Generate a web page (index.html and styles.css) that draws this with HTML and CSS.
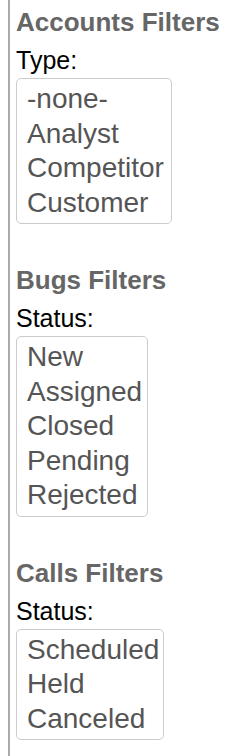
FILE: index.html
```html
<!DOCTYPE html>
<html lang="en">

<head>
    <meta charset="UTF-8">
    <title>Filters</title>
    <link rel="stylesheet" href="styles.css">
</head>

<body>
    <div class="sidebar">
        <div class="filter-group">
            <h3 class="filter-title">Accounts Filters</h3>
            <label class="filter-label" for="account-type">Type:</label>
            <select class="filter-list accounts-list" id="account-type" multiple size="4">
                <option>-none-</option>
                <option>Analyst</option>
                <option>Competitor</option>
                <option>Customer</option>
            </select>
        </div>

        <div class="filter-group">
            <h3 class="filter-title">Bugs Filters</h3>
            <label class="filter-label" for="bug-status">Status:</label>
            <select class="filter-list bugs-list" id="bug-status" multiple size="5">
                <option>New</option>
                <option>Assigned</option>
                <option>Closed</option>
                <option>Pending</option>
                <option>Rejected</option>
            </select>
        </div>

        <div class="filter-group">
            <h3 class="filter-title">Calls Filters</h3>
            <label class="filter-label" for="call-status">Status:</label>
            <select class="filter-list calls-list" id="call-status" multiple size="3">
                <option>Scheduled</option>
                <option>Held</option>
                <option>Canceled</option>
            </select>
        </div>
    </div>
</body>

</html>
```

FILE: styles.css
```css
*{
    box-sizing: border-box;
}

body{
    margin: 0;
    font-family: "Liberation Sans", Arial, sans-serif;
}

.sidebar{
    margin-left: 8px;
    min-height: 756px;
    padding: 7px 0 0 6px;
    border-left: 2px solid #aaa;
}

.filter-group + .filter-group{
    margin-top: 41px;
}

.filter-title{
    margin: 0;
    font-size: 26px;
    line-height: 30px;
    font-weight: bold;
    color: #666;
}

.filter-label{
    display: block;
    margin-top: 9px;
    font-size: 25px;
    line-height: 28px;
    color: #000;
}

.filter-list{
    display: block;
    margin-top: 4px;
    padding: 3px 0;
    border: 1px solid #ccc;
    border-radius: 5px;
    background: #fff;
    font-family: "Liberation Sans", Arial, sans-serif;
    font-size: 28px;
    color: #555;
    overflow: hidden;
    outline: none;
}

.filter-list option{
    padding: 1px 10px 1.5px;
}

.accounts-list{
    width: 156px;
}

.bugs-list{
    width: 132px;
}

.calls-list{
    width: 148px;
}
```
